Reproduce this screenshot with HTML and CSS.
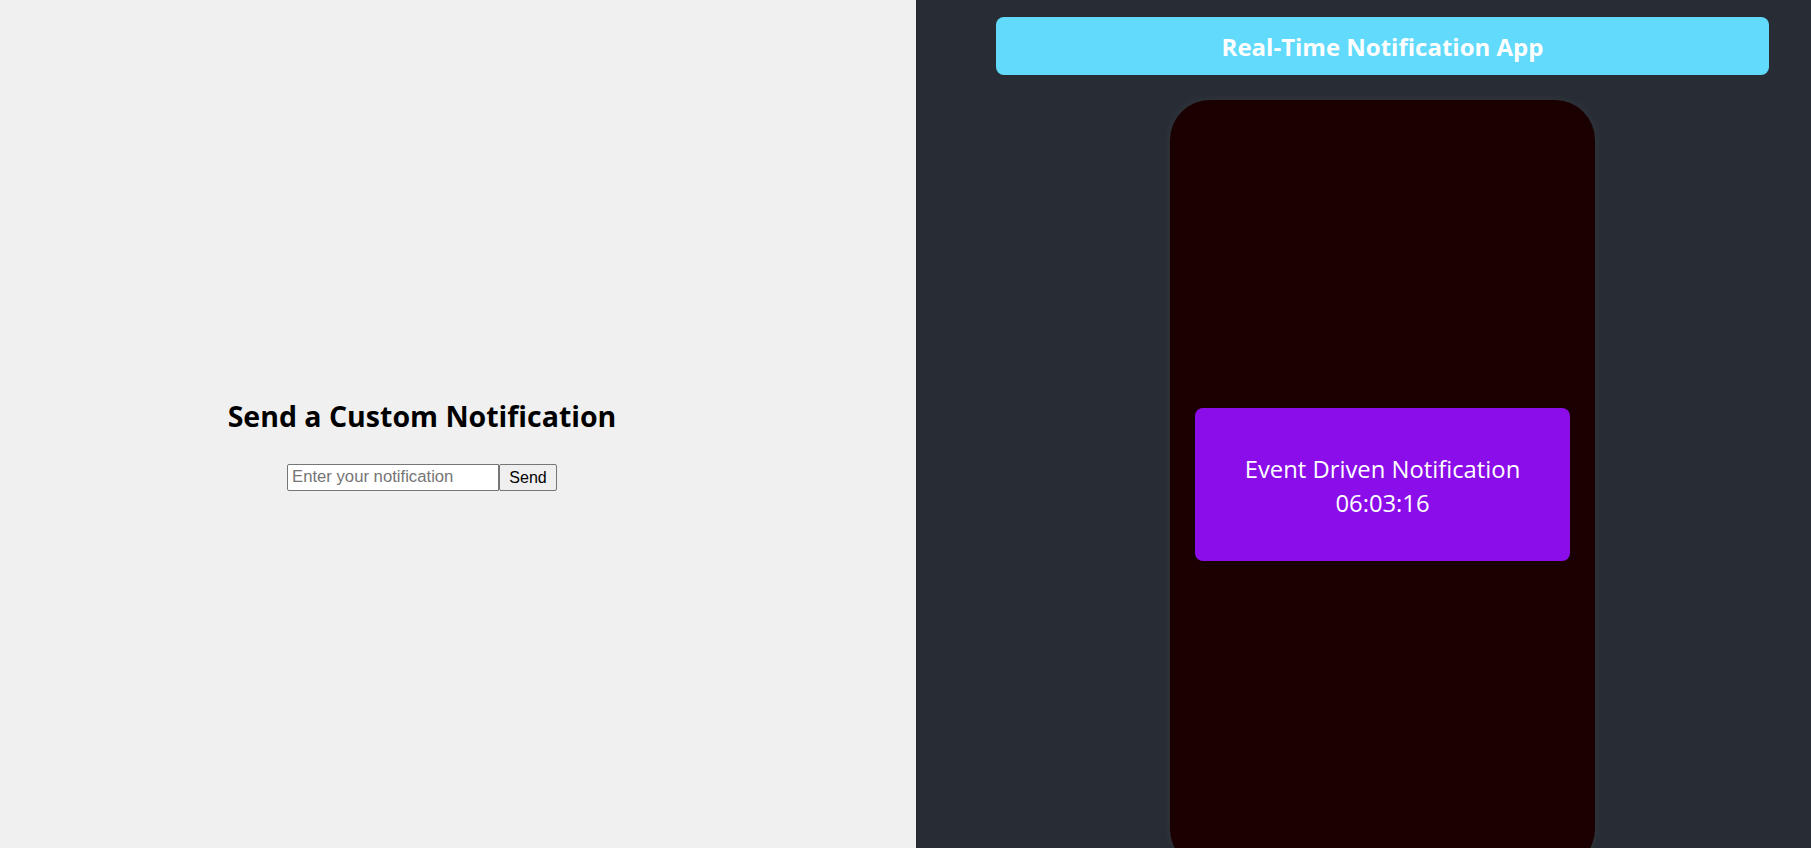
FILE: index.html
```html
<!DOCTYPE html>
<html lang="en">
<head>
<meta charset="utf-8">
<title>Real-Time Notification App</title>
<link rel="stylesheet" href="styles.css">
</head>
<body>
<div class="app">
  <section class="sender">
    <h2 class="sender-title">Send a Custom Notification</h2>
    <div class="sender-form">
      <input class="sender-input" type="text" placeholder="Enter your notification">
      <button class="sender-button" type="button">Send</button>
    </div>
  </section>
  <section class="viewer">
    <header class="app-header">Real-Time Notification App</header>
    <div class="phone">
      <div class="notification">
        <div class="notification-text">Event Driven Notification</div>
        <div class="notification-time">06:03:16</div>
      </div>
    </div>
  </section>
</div>
</body>
</html>
```
FILE: styles.css
```css
* { box-sizing: border-box; }
html, body { margin: 0; padding: 0; height: 100%; overflow: hidden; }
body { font-family: "Open Sans", "Noto Sans", sans-serif; }
.app { display: flex; height: 848px; }
.sender {
  width: 916px;
  flex: none;
  background: #f0f0f0;
  display: flex;
  flex-direction: column;
  align-items: center;
  justify-content: center;
  padding: 41px 72px 0 0;
  box-shadow: 1px 0 2px rgba(0,0,0,0.12);
  position: relative;
  z-index: 1;
}
.sender-title {
  margin: 0 0 29px;
  font-size: 28.5px;
  line-height: 37px;
  font-weight: 700;
  color: #000;
}
.sender-form { display: flex; }
.sender-input {
  width: 212px;
  height: 27px;
  margin: 0;
  padding: 0 4px 1px;
  border: 1px solid #767676;
  border-radius: 2px 0 0 2px;
  font-family: "Liberation Sans", Arial, sans-serif;
  font-size: 16.7px;
  color: #000;
  background: #fff;
}
.sender-input::placeholder { color: #757575; }
.sender-button {
  width: 58px;
  height: 27px;
  margin: 0;
  padding: 0 6px;
  border: 1px solid #767676;
  border-radius: 2px;
  background: #efefef;
  font-family: "Liberation Sans", Arial, sans-serif;
  font-size: 16px;
  color: #000;
}
.viewer {
  flex: 1;
  background: #282c34;
  display: flex;
  flex-direction: column;
  align-items: center;
  padding: 17px 0 0 38px;
}
.app-header {
  width: 773px;
  height: 58px;
  flex: none;
  background: #61dafb;
  border-radius: 8px;
  color: #fff;
  font-weight: 700;
  font-size: 24px;
  display: flex;
  align-items: center;
  justify-content: center;
}
.phone {
  margin-top: 25px;
  width: 425px;
  height: 769px;
  flex: none;
  background: #1a0000;
  border-radius: 40px;
  box-shadow: 0 0 12px rgba(255,255,255,0.05);
  display: flex;
  align-items: center;
  justify-content: center;
}
.notification {
  width: 375px;
  height: 153px;
  padding-top: 4px;
  background: #8b0dea;
  border-radius: 8px;
  color: #fff;
  font-size: 23.8px;
  line-height: 33.5px;
  text-align: center;
  display: flex;
  flex-direction: column;
  justify-content: center;
}
```
